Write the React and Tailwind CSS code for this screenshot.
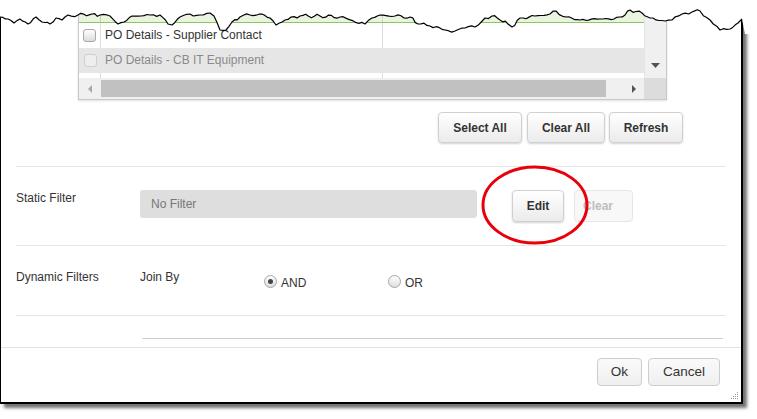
import React from "react";

// rough outline of the torn top edge (x, y)
const anchors = [
  [0, 17], [8, 19], [14, 23], [20, 19], [28, 24], [36, 17], [42, 22], [50, 24], [56, 18], [62, 20],
  [68, 15], [78, 15], [92, 14], [100, 15], [110, 16], [118, 24], [124, 22], [132, 16], [150, 15],
  [160, 15], [168, 24], [172, 25], [180, 17], [190, 14], [200, 15], [210, 13], [214, 16], [220, 30],
  [226, 30], [232, 22], [240, 17], [250, 15], [262, 14], [270, 18], [276, 25], [285, 20], [300, 16],
  [320, 16], [340, 17], [365, 24], [372, 18], [380, 15], [395, 16], [410, 17], [418, 24], [430, 26],
  [445, 30], [455, 31], [465, 28], [475, 27], [485, 18], [492, 16], [500, 20], [508, 24], [512, 27],
  [520, 18], [535, 16], [550, 14], [556, 11], [566, 17], [580, 20], [600, 19], [614, 19], [625, 15],
  [630, 10], [642, 13], [650, 18], [665, 21], [672, 20], [682, 14], [692, 12], [700, 11], [710, 20],
  [720, 30], [730, 29], [738, 23], [742, 19],
];

const tornPoints = () => {
  const pts = [];
  for (let i = 0; i < anchors.length - 1; i++) {
    const [x0, y0] = anchors[i];
    const [x1, y1] = anchors[i + 1];
    const steps = Math.max(1, Math.round((x1 - x0) / 3));
    for (let s = 0; s < steps; s++) {
      const t = s / steps;
      const x = x0 + (x1 - x0) * t;
      const jit = s === 0 ? 0 : Math.sin(x * 1.7) * 1.1 + Math.sin(x * 0.53) * 0.7;
      pts.push([x, y0 + (y1 - y0) * t + jit]);
    }
  }
  pts.push(anchors[anchors.length - 1]);
  return pts.map(([x, y]) => `${x.toFixed(1)},${y.toFixed(1)}`).join(" L");
};

const edge = tornPoints();

const Checkbox = ({ faded }) => (
  <span
    className={
      faded
        ? "block w-[13px] h-[13px] rounded-[3px] border border-[#cfcfcf] bg-[#eeeeee]"
        : "block w-[13px] h-[13px] rounded-[3px] border border-[#a8a8a8] bg-linear-to-b from-white to-[#dcdcdc]"
    }
  />
);

const Radio = ({ checked }) => (
  <span className="flex items-center justify-center w-[13px] h-[13px] rounded-full border border-[#a5a5a5] bg-linear-to-b from-white to-[#dedede]">
    {checked && <span className="block w-[5px] h-[5px] rounded-full bg-[#444]" />}
  </span>
);

const Btn = ({ children, className }) => (
  <button
    className={`h-[31px] rounded-[4px] border border-[#d0d0d0] bg-linear-to-b from-white to-[#ebebeb] text-[12px] font-bold text-[#333] shadow-[0_1px_2px_rgba(0,0,0,0.18)] ${className}`}
  >
    {children}
  </button>
);

const App = () => {
  return (
    <div className="relative w-[757px] h-[419px] bg-white overflow-hidden font-['Liberation_Sans',Arial,sans-serif] text-[#333]">
      <div className="relative w-[743px] h-[404px] border-l border-r-2 border-b-2 border-black bg-white shadow-[4px_4px_3px_rgba(0,0,0,0.55)] flex flex-col">
        {/* grid */}
        <div className="ml-[77px] w-[589px] h-[100px] flex flex-col border-x border-b border-[#c8c8c8] shadow-[0_1px_2px_rgba(0,0,0,0.12)]">
          <div className="flex h-[78px]">
            <div className="w-[565px] flex flex-col">
              <div className="h-[23px] flex bg-[#e9f4df] border-b border-[#8dc65f]">
                <div className="w-[22px] border-r border-[#b9d9a0]" />
                <div className="w-[282px] border-r border-[#d5d5d5]" />
              </div>
              <div className="h-[25px] flex text-[12px] bg-white">
                <div className="w-[22px] flex items-center justify-center border-r border-[#dddddd]">
                  <Checkbox />
                </div>
                <div className="w-[282px] flex items-center pl-[4px] pb-[1px] border-r border-[#dddddd]">
                  PO Details - Supplier Contact
                </div>
              </div>
              <div className="h-[25px] flex text-[12px] bg-[#e6e6e6] text-[#8a8a8a]">
                <div className="w-[22px] flex items-center justify-center">
                  <Checkbox faded />
                </div>
                <div className="flex items-center pl-[4px] pb-[1px]">PO Details - CB IT Equipment</div>
              </div>
              <div className="flex-1 flex bg-white">
                <div className="w-[22px] border-r border-[#dddddd]" />
                <div className="w-[282px] border-r border-[#dddddd]" />
              </div>
            </div>
            <div className="w-[22px] bg-[#f0f0f0] border-l border-[#e4e4e4] flex flex-col justify-end items-center pb-[10px]">
              <svg width="9" height="5" viewBox="0 0 9 5">
                <path d="M0 0 H9 L4.5 5 Z" fill="#555" />
              </svg>
            </div>
          </div>
          <div className="flex h-[21px]">
            <div className="w-[565px] bg-[#f0f0f0] flex items-center">
              <div className="w-[22px] flex justify-center">
                <svg width="4" height="8" viewBox="0 0 4 8">
                  <path d="M4 0 V8 L0 4 Z" fill="#a8a8a8" />
                </svg>
              </div>
              <div className="w-[505px] h-[17px] bg-[#c1c1c1]" />
              <svg className="ml-[26px]" width="4" height="8" viewBox="0 0 4 8">
                <path d="M0 0 V8 L4 4 Z" fill="#555" />
              </svg>
            </div>
            <div className="w-[22px] bg-[#dcdcdc]" />
          </div>
        </div>

        {/* grid buttons */}
        <div className="flex mt-[12px] ml-[437px] h-[31px]">
          <Btn className="w-[84px]">Select All</Btn>
          <Btn className="w-[78px] ml-[5px]">Clear All</Btn>
          <Btn className="w-[74px] ml-[4px]">Refresh</Btn>
        </div>

        <div className="mt-[23px] ml-[15px] w-[710px] border-t border-[#e6e6e6]" />

        {/* static filter */}
        <div className="h-[78px] flex items-start ml-[15px] pt-[23px] text-[12px]">
          <div className="w-[124px] leading-[14px] mt-[1px]">Static Filter</div>
          <div className="w-[337px] h-[28px] rounded-[3px] bg-[#dedede] flex items-center pl-[11px] text-[#777]">
            No Filter
          </div>
          <Btn className="w-[52px] h-[32px] ml-[35px]">Edit</Btn>
          <button className="w-[59px] h-[32px] ml-[10px] rounded-[4px] border border-[#e6e6e6] bg-[#f8f8f8] text-[12px] font-bold text-[#bdbdbd] pl-[8px] text-left">
            Clear
          </button>
        </div>

        <div className="ml-[15px] w-[710px] border-t border-[#e6e6e6]" />

        {/* dynamic filters */}
        <div className="h-[69px] flex items-start ml-[15px] pt-[24px] text-[12px]">
          <div className="w-[124px] leading-[14px]">Dynamic Filters</div>
          <div className="w-[124px] leading-[14px]">Join By</div>
          <div className="w-[124px] flex items-start">
            <span className="mt-[5px]">
              <Radio checked />
            </span>
            <span className="ml-[4px] mt-[6px] leading-[14px]">AND</span>
          </div>
          <div className="flex items-start">
            <span className="mt-[5px]">
              <Radio />
            </span>
            <span className="ml-[4px] mt-[6px] leading-[14px]">OR</span>
          </div>
        </div>

        <div className="ml-[15px] w-[710px] border-t border-[#e6e6e6]" />

        <div className="h-[31px] pt-[22px]">
          <div className="ml-[141px] w-[581px] border-t border-[#cfcfcf]" />
        </div>

        <div className="border-t border-[#e2e2e2]" />

        {/* footer */}
        <div className="flex-1 relative flex items-start pt-[10px] pl-[596px]">
          <button className="w-[45px] h-[28px] rounded-[4px] border border-[#cdcdcd] bg-linear-to-b from-[#fafafa] to-[#efefef] text-[13.5px] text-[#333]">
            Ok
          </button>
          <button className="w-[72px] h-[28px] ml-[6px] rounded-[4px] border border-[#cdcdcd] bg-linear-to-b from-[#fafafa] to-[#efefef] text-[13.5px] text-[#333]">
            Cancel
          </button>
          <svg className="absolute right-[2px] bottom-[2px]" width="8" height="8" viewBox="0 0 8 8">
            <g fill="#9a9a9a">
              <rect x="6" y="0" width="1" height="1" />
              <rect x="4" y="2" width="1" height="1" />
              <rect x="6" y="2" width="1" height="1" />
              <rect x="2" y="4" width="1" height="1" />
              <rect x="4" y="4" width="1" height="1" />
              <rect x="6" y="4" width="1" height="1" />
              <rect x="0" y="6" width="1" height="1" />
              <rect x="2" y="6" width="1" height="1" />
              <rect x="4" y="6" width="1" height="1" />
              <rect x="6" y="6" width="1" height="1" />
            </g>
          </svg>
        </div>
      </div>

      {/* red annotation ring */}
      <svg className="absolute left-0 top-0 pointer-events-none" width="757" height="419">
        <ellipse cx="535" cy="205" rx="52" ry="38" fill="none" stroke="#e8000b" strokeWidth="3" />
      </svg>

      {/* torn top edge */}
      <svg className="absolute left-0 top-0 pointer-events-none" width="757" height="45">
        <path d={`M0,0 L${edge} L745,34 L757,34 L757,0 Z`} fill="#fff" />
        <path d={`M${edge}`} fill="none" stroke="#000" strokeWidth="1.2" strokeLinejoin="round" />
      </svg>
    </div>
  );
};

export default App;
